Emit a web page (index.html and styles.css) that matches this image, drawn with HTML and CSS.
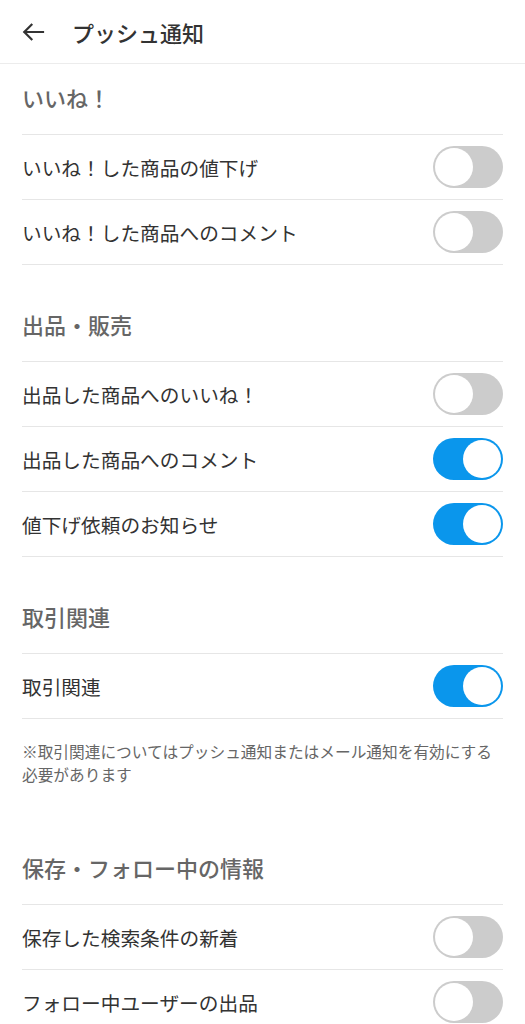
FILE: index.html
```html
<!DOCTYPE html>
<html lang="ja">
<head>
<meta charset="utf-8">
<link rel="stylesheet" href="styles.css">
</head>
<body>
<header class="topbar">
  <svg class="back" width="24" height="24" viewBox="0 0 24 24" aria-hidden="true"><path d="M22 12H3.5M10.5 4.8L3.3 12l7.2 7.2" fill="none" stroke="#333" stroke-width="2.2" stroke-linecap="square"/></svg>
  <h1 class="title">プッシュ通知</h1>
</header>
<main>
  <section class="group">
    <h2 class="group-title">いいね！</h2>
    <div class="row"><span class="label">いいね！した商品の値下げ</span><span class="toggle"></span></div>
    <div class="row"><span class="label">いいね！した商品へのコメント</span><span class="toggle"></span></div>
  </section>
  <section class="group">
    <h2 class="group-title">出品・販売</h2>
    <div class="row"><span class="label">出品した商品へのいいね！</span><span class="toggle"></span></div>
    <div class="row"><span class="label">出品した商品へのコメント</span><span class="toggle on"></span></div>
    <div class="row"><span class="label">値下げ依頼のお知らせ</span><span class="toggle on"></span></div>
  </section>
  <section class="group">
    <h2 class="group-title">取引関連</h2>
    <div class="row"><span class="label">取引関連</span><span class="toggle on"></span></div>
    <p class="note">※取引関連についてはプッシュ通知またはメール通知を有効にする必要があります</p>
  </section>
  <section class="group">
    <h2 class="group-title">保存・フォロー中の情報</h2>
    <div class="row"><span class="label">保存した検索条件の新着</span><span class="toggle"></span></div>
    <div class="row"><span class="label">フォロー中ユーザーの出品</span><span class="toggle"></span></div>
  </section>
</main>
</body>
</html>
```

FILE: styles.css
```css
* { box-sizing: border-box; }
html, body { margin: 0; padding: 0; background: #fff; }
body {
  font-family: "Noto Sans CJK JP", "Noto Sans", sans-serif;
  color: #333;
}
.topbar {
  height: 64px;
  display: flex;
  align-items: center;
  padding-left: 21px;
  border-bottom: 1px solid #ececec;
}
.back { display: block; margin-top: 1px; }
.title {
  margin: 0 0 0 27px;
  font-size: 22px;
  font-weight: 500;
  color: #333;
  line-height: 1;
}
main { padding: 0 22px; }
.group { margin-top: 26px; }
.group:first-child { margin-top: 0; }
.group-title {
  margin: 0;
  height: 71px;
  display: flex;
  align-items: center;
  padding-bottom: 5px;
  font-size: 22px;
  font-weight: 500;
  color: #666;
  border-bottom: 1px solid #e6e6e6;
}
.row {
  height: 65px;
  display: flex;
  align-items: center;
  justify-content: space-between;
  border-bottom: 1px solid #e6e6e6;
}
.label { font-size: 19.7px; color: #333; }
.toggle {
  position: relative;
  width: 70px;
  height: 42px;
  border-radius: 21px;
  background: #cccccc;
  flex: none;
}
.toggle::after {
  content: "";
  position: absolute;
  top: 2px;
  left: 2px;
  width: 38px;
  height: 38px;
  border-radius: 50%;
  background: #fff;
}
.toggle.on { background: #0a96ec; }
.toggle.on::after { left: 30px; }
.note {
  margin: 0;
  padding: 21px 0 22px;
  font-size: 15.7px;
  line-height: 23px;
  color: #666;
}
```
